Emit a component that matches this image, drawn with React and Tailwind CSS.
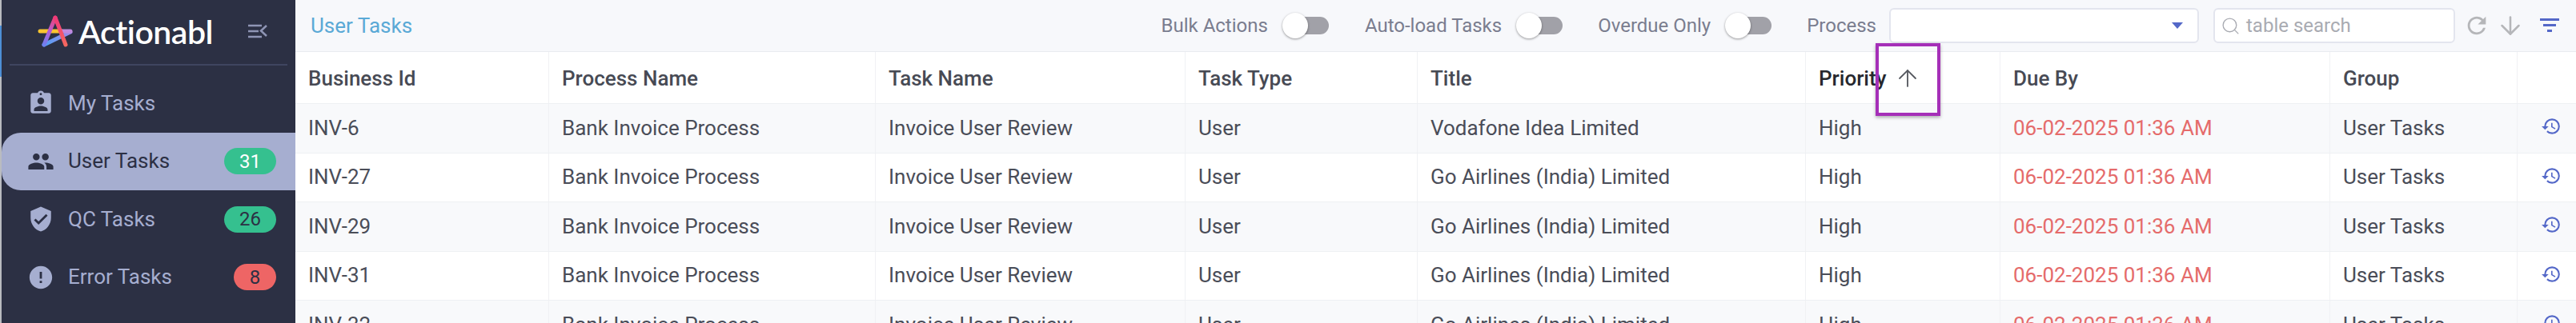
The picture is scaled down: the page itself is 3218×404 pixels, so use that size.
import { ArrowDown, ArrowUp, Search } from 'lucide-react'
import { MdAssignmentInd, MdError, MdHistory, MdPeople, MdRefresh, MdVerifiedUser } from 'react-icons/md'

const rows = [
  ['INV-6', 'Vodafone Idea Limited'],
  ['INV-27', 'Go Airlines (India) Limited'],
  ['INV-29', 'Go Airlines (India) Limited'],
  ['INV-31', 'Go Airlines (India) Limited'],
  ['INV-32', 'Go Airlines (India) Limited'],
]

const gridCols = 'grid grid-cols-[316px_408px_387px_290px_485px_243px_412px_234px_74px]'

function Logo() {
  return (
    <svg width="46" height="42" viewBox="0 0 46 42" fill="none" strokeLinecap="round">
      <defs>
        <linearGradient id="leftLeg" x1="22" y1="3" x2="8" y2="37" gradientUnits="userSpaceOnUse">
          <stop offset="0" stopColor="#f0426e" />
          <stop offset="0.5" stopColor="#b65bd6" />
          <stop offset="1" stopColor="#6f7ff0" />
        </linearGradient>
        <linearGradient id="rightLeg" x1="22" y1="3" x2="36" y2="37" gradientUnits="userSpaceOnUse">
          <stop offset="0" stopColor="#f0397a" />
          <stop offset="1" stopColor="#f5675f" />
        </linearGradient>
        <linearGradient id="lowBar" x1="42" y1="20" x2="8" y2="37" gradientUnits="userSpaceOnUse">
          <stop offset="0" stopColor="#a486e8" />
          <stop offset="1" stopColor="#4fa0f5" />
        </linearGradient>
      </defs>
      <path d="M8 37 L41 21" stroke="url(#lowBar)" strokeWidth="5" />
      <path d="M3 20 H30" stroke="#fbc52f" strokeWidth="5" />
      <path d="M30 20 H41" stroke="#c089dd" strokeWidth="5" />
      <path d="M22 3 L8 37" stroke="url(#leftLeg)" strokeWidth="5" />
      <path d="M22 3 L35 37" stroke="url(#rightLeg)" strokeWidth="5" />
    </svg>
  )
}

function SideItem({ icon: Icon, label, count, badge, active }) {
  return (
    <div className={`flex items-center h-[72.5px] pl-[32px] pr-[24px] rounded-l-[24px] ${active ? 'bg-[#a6aed0] text-[#2c3044]' : 'text-[#a6aed0]'}`}>
      <Icon size={34} />
      <span className="ml-[17px] text-[26px]">{label}</span>
      {count && (
        <span className={`ml-auto h-[33px] rounded-full flex items-center justify-center text-[24px] ${badge} ${count.length > 1 ? 'w-[65px]' : 'w-[53px]'}`}>
          {count}
        </span>
      )}
    </div>
  )
}

function Toggle() {
  return (
    <div className="relative w-[58px] h-[32px] flex items-center">
      <div className="ml-[4px] w-[54px] h-[22px] rounded-full bg-[#a1a1a8]" />
      <div className="absolute left-0 top-0 w-[32px] h-[32px] rounded-full bg-white shadow-[0_1px_3px_rgba(0,0,0,0.4)]" />
    </div>
  )
}

export default function App() {
  return (
    <div className="relative flex h-[404px] w-[3218px] overflow-hidden bg-white font-['Roboto',sans-serif]">
      <div className="w-[2px] shrink-0 bg-[#b9bbc0] pt-[32px]">
        <div className="h-[64px] bg-[#4d8fd6]" />
      </div>

      <aside className="w-[367px] shrink-0 bg-[#2c3044]">
        <div className="mx-[10px] h-[82px] border-b-2 border-[#3f4560] flex items-center pb-[2px]">
          <div className="ml-[35px] mt-[2px]"><Logo /></div>
          <span className="ml-[5px] text-[41px] leading-none font-semibold tracking-[-0.5px] text-white font-['Lato',sans-serif]">Actionabl</span>
          <svg className="ml-auto mr-[25px]" width="24" height="18" viewBox="0 0 24 18" fill="none" stroke="#8f95b5" strokeWidth="2.5">
            <path d="M0 2 H17 M0 9 H13 M0 16 H17" />
            <path d="M23 2 L16 8.5 L23 15" />
          </svg>
        </div>
        <div className="mt-[11px] flex flex-col">
          <SideItem icon={MdAssignmentInd} label="My Tasks" />
          <SideItem icon={MdPeople} label="User Tasks" count="31" badge="bg-[#35c08f] text-white" active />
          <SideItem icon={MdVerifiedUser} label="QC Tasks" count="26" badge="bg-[#35c08f] text-[#2c3044]" />
          <SideItem icon={MdError} label="Error Tasks" count="8" badge="bg-[#ee6565] text-[#2c3044]" />
        </div>
      </aside>

      <main className="flex-1 min-w-0">
        <div className="h-[65px] bg-[#f7f8fb] border-b border-[#e9ebf0] flex items-center text-[24px] text-[#7a7d8f]">
          <span className="ml-[19px] text-[26px] text-[#5aa9d6]">User Tasks</span>
          <div className="ml-auto flex items-center">
            <span>Bulk Actions</span>
            <div className="ml-[18px]"><Toggle /></div>
            <span className="ml-[45px]">Auto-load Tasks</span>
            <div className="ml-[18px]"><Toggle /></div>
            <span className="ml-[44px]">Overdue Only</span>
            <div className="ml-[18px]"><Toggle /></div>
            <span className="ml-[44px]">Process</span>
            <div className="ml-[16px] w-[387px] h-[44px] bg-white border-2 border-[#e3e5ee] rounded-[6px] flex items-center justify-end pr-[18px]">
              <div className="w-0 h-0 border-l-[7px] border-r-[7px] border-t-[8px] border-l-transparent border-r-transparent border-t-[#5468c8]" />
            </div>
            <div className="ml-[18px] w-[302px] h-[44px] bg-white border-2 border-[#e3e5ee] rounded-[6px] flex items-center pl-[7px] text-[#a9abb2]">
              <Search size={25} strokeWidth={1.3} />
              <span className="ml-[7px]">table search</span>
            </div>
            <MdRefresh size={34} className="ml-[10px] text-[#b5b6b9]" />
            <ArrowDown size={36} strokeWidth={1.7} className="ml-[7px] text-[#b5b6b9]" />
            <svg className="ml-[19px] mr-[21px]" width="24" height="18" viewBox="0 0 24 18" fill="#5468c8">
              <rect x="0" y="0" width="24" height="3" />
              <rect x="4" y="7" width="16" height="3" />
              <rect x="9" y="14" width="6" height="3" />
            </svg>
          </div>
        </div>

        <div className={`${gridCols} h-[65px] border-b border-[#eef0f3] text-[26px] font-medium text-[#474a54]`}>
          {['Business Id', 'Process Name', 'Task Name', 'Task Type', 'Title', 'Priority', 'Due By', 'Group', ''].map((h, i) => (
            <div key={i} className={`flex items-center pl-[16px] pt-[2px] ${i > 0 ? 'border-l border-[#f0f1f4]' : ''} ${h === 'Priority' ? 'text-[#26282e]' : ''}`}>
              {h}
              {h === 'Priority' && <ArrowUp size={34} strokeWidth={1.3} className="ml-[10px] text-[#55585f]" />}
            </div>
          ))}
        </div>

        {rows.map(([id, title], i) => (
          <div key={id} className={`${gridCols} h-[61.5px] border-b border-[#eef0f3] text-[26px] text-[#4a4d58] ${i % 2 === 0 ? 'bg-[#f8f9fb]' : 'bg-white'}`}>
            {[id, 'Bank Invoice Process', 'Invoice User Review', 'User', title, 'High'].map((v, j) => (
              <div key={j} className={`flex items-center pl-[16px] ${j > 0 ? 'border-l border-[#f0f1f4]' : ''}`}>{v}</div>
            ))}
            <div className="flex items-center pl-[16px] border-l border-[#f0f1f4] text-[#e56b6b]">06-02-2025 01:36 AM</div>
            <div className="flex items-center pl-[16px] border-l border-[#f0f1f4]">User Tasks</div>
            <div className="flex items-start justify-center pt-[15px] pl-[10px] border-l border-[#f0f1f4]">
              <MdHistory size={26} className="text-[#5468c8]" />
            </div>
          </div>
        ))}
      </main>

      {/* highlight drawn over the screenshot */}
      <div className="absolute left-[2343px] top-[54px] w-[81px] h-[91px] border-4 border-[#a52fb8] shadow-[0_2px_4px_rgba(0,0,0,0.3)]" />
    </div>
  )
}
